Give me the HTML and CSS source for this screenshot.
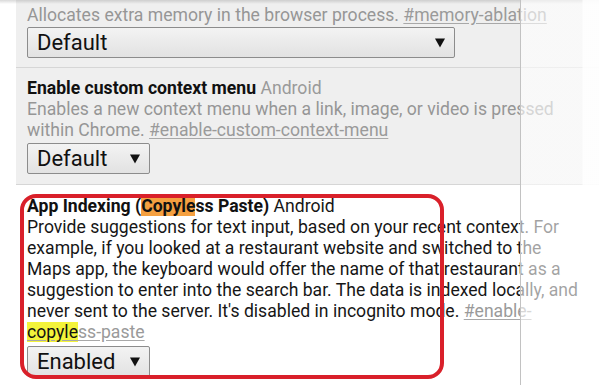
FILE: index.html
```html
<!DOCTYPE html>
<html>
<head>
<meta charset="utf-8">
<link rel="stylesheet" href="styles.css">
</head>
<body>
<div class="page">
  <section class="flag flag-gray flag-first">
    <div class="line desc">Allocates extra memory in the browser process. <span class="link">#memory-ablation</span></div>
    <div class="select select-wide"><span class="select-text">Default</span><svg class="arrow" viewBox="0 0 10 10"><polygon points="0,1 10,1 5,10"/></svg></div>
  </section>
  <section class="flag flag-gray">
    <div class="line"><b class="title">Enable custom context menu</b> <span class="platform">Android</span></div>
    <div class="line desc">Enables a new context menu when a link, image, or video is pressed</div>
    <div class="line desc">within Chrome. <span class="link">#enable-custom-context-menu</span></div>
    <div class="select"><span class="select-text">Default</span><svg class="arrow" viewBox="0 0 10 10"><polygon points="0,1 10,1 5,10"/></svg></div>
  </section>
  <section class="flag flag-white">
    <div class="line"><b class="title">App Indexing (<span class="hl-active">Copyle</span>ss Paste)</b> <span class="platform-dark">Android</span></div>
    <div class="line">Provide suggestions for text input, based on your recent context. For</div>
    <div class="line">example, if you looked at a restaurant website and switched to the</div>
    <div class="line">Maps app, the keyboard would offer the name of that restaurant as a</div>
    <div class="line">suggestion to enter into the search bar. The data is indexed locally, and</div>
    <div class="line">never sent to the server. It's disabled in incognito mode. <span class="link">#enable-</span></div>
    <div class="line"><span class="link"><span class="hl-match">copyle</span>ss-paste</span></div>
    <div class="select"><span class="select-text">Enabled</span><svg class="arrow" viewBox="0 0 10 10"><polygon points="0,1 10,1 5,10"/></svg></div>
  </section>
</div>
<div class="top-shade"></div>
<div class="side-panel"></div>
<div class="annotation"></div>
</body>
</html>
```
FILE: styles.css
```css
html, body {
  margin: 0;
  padding: 0;
  background: #ffffff;
  width: 599px;
  height: 385px;
  overflow: hidden;
}

body {
  font-family: Roboto, "Liberation Sans", sans-serif;
  font-size: 17.6px;
  color: #161616;
  position: relative;
}

.page {
  display: flex;
  flex-direction: column;
}

.flag {
  display: flex;
  flex-direction: column;
  align-items: flex-start;
}

.flag-gray {
  background: #efefef;
  margin-left: 16px;
  padding: 10px 0 10px 11px;
  border-bottom: 1px solid #d6d6d6;
}

.flag-first {
  padding-top: 5px;
  padding-bottom: 9px;
}

.flag-white {
  background: #ffffff;
  padding: 11px 0 0 27px;
}

.line {
  height: 21px;
  line-height: 21px;
  white-space: nowrap;
}

.desc {
  color: #969696;
}

.title {
  font-weight: 700;
  color: #111111;
}

.platform {
  color: #9a9a9a;
}

.platform-dark {
  color: #161616;
}

.link {
  color: #9a9a9a;
  text-decoration: underline;
  text-decoration-color: #a8a8a8;
  text-underline-offset: 2px;
}

.hl-active {
  background: #f5a040;
}

.hl-match {
  background: #f3f33a;
  color: #111111;
}

.select {
  box-sizing: border-box;
  height: 31px;
  width: 123px;
  margin-top: 2px;
  display: flex;
  align-items: center;
  justify-content: space-between;
  padding: 0 9px 0 9px;
  border: 1px solid #8c8c8c;
  border-radius: 2px;
  background: linear-gradient(#f3f3f3, #e2e2e2);
  font-size: 22px;
  color: #111111;
}

.select-wide {
  width: 428px;
  margin-top: 1px;
}

.flag-white .select {
  margin-top: 3px;
}

.arrow {
  width: 10px;
  height: 11px;
  fill: #111111;
}

.top-shade {
  position: absolute;
  left: 0;
  top: 0;
  width: 599px;
  height: 4px;
  background: linear-gradient(rgba(120,120,120,0.28), rgba(120,120,120,0));
}

.side-panel {
  position: absolute;
  left: 520px;
  top: 0;
  width: 79px;
  height: 385px;
  border-left: 1px solid #c2c2c2;
  background: linear-gradient(90deg, rgba(255,255,255,0.6) 0px, rgba(255,255,255,0.6) 61px, rgba(255,255,255,0.92) 62px);
}

.annotation {
  position: absolute;
  left: 20px;
  top: 194px;
  width: 424px;
  height: 185px;
  box-sizing: border-box;
  border: 4px solid #d9202a;
  border-radius: 16px;
}
```
